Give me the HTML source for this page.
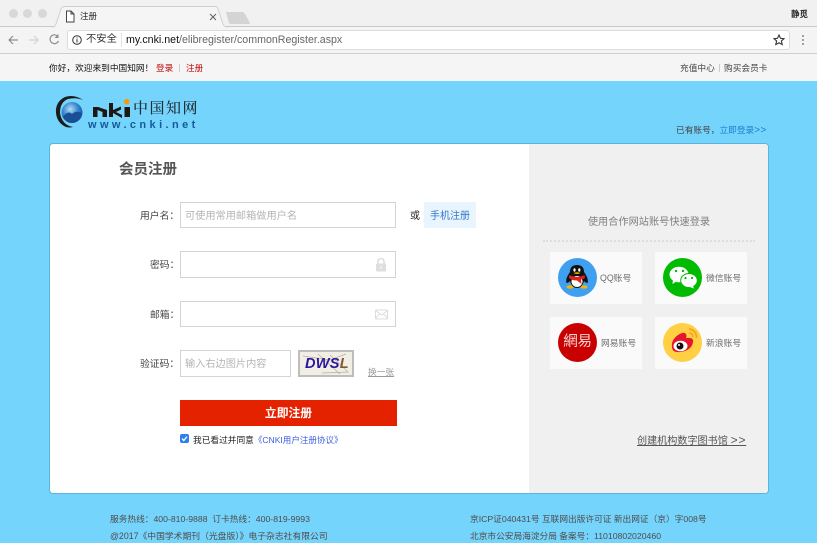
<!DOCTYPE html>
<html lang="zh"><head><meta charset="utf-8"><title>注册</title>
<style>
html,body{margin:0;padding:0;background:#fff}
#p{position:relative;width:817px;height:543px;overflow:hidden;background:#75d4fc;font-family:"Liberation Sans","Noto Sans CJK SC",sans-serif;filter:blur(.35px)}
#p div,#p span.a,#p svg{position:absolute}
.t{white-space:nowrap;line-height:12px}
.inp{background:#fff;border:1px solid #d4d4d4;box-sizing:border-box}
.sb{background:#fafafa;width:92px;height:52px}
</style></head><body><div id="p">

<!-- browser chrome -->
<div style="left:0;top:0;width:817px;height:27px;background:#f1f1f1"></div>
<div style="left:0;top:26px;width:817px;height:1px;background:#c9c9c9"></div>
<div style="left:0;top:27px;width:817px;height:26px;background:#f4f4f4"></div>
<div style="left:0;top:53px;width:817px;height:1px;background:#cfcfcf"></div>
<div style="left:9px;top:9px;width:9px;height:9px;border-radius:50%;background:#d8d8d8"></div>
<div style="left:23px;top:9px;width:9px;height:9px;border-radius:50%;background:#d8d8d8"></div>
<div style="left:38px;top:9px;width:9px;height:9px;border-radius:50%;background:#d8d8d8"></div>
<svg style="left:50px;top:4px" width="185" height="24" viewBox="0 0 185 24"><path d="M2 23 Q5 23 6 20 L11 5 Q12 2.500 15 2.500 L165 2.500 Q167 2.500 168 5 L173 20 Q174 23 178 23" fill="#f5f5f5" stroke="#cfcfcf"/></svg>
<svg style="left:225px;top:11px" width="26" height="14" viewBox="0 0 26 14"><path d="M1 1.500 Q1 1 2 1 L17 1 Q19 1 20 3 L25 12 Q25.500 13 24 13 L6 13 Q4.500 13 4 12 Z" fill="#d4d4d4"/></svg>
<svg style="left:65px;top:10px" width="10" height="13" viewBox="0 0 10 13"><path d="M1.500 1 L6 1 L9 4 L9 12 L1.500 12 Z M6 1 L6 4 L9 4" fill="#fff" stroke="#444" stroke-width="1"/></svg>
<div class="t" style="left:80px;top:10px;font-size:8.500px;color:#222">注册</div>
<svg style="left:209px;top:13px" width="8" height="8" viewBox="0 0 8 8"><path d="M1 1 L7 7 M7 1 L1 7" stroke="#666" stroke-width="1.100"/></svg>
<div class="t" style="left:791px;top:8px;font-size:8.500px;font-weight:bold;color:#222">静觅</div>

<svg style="left:7px;top:33px" width="60" height="14" viewBox="0 0 60 14">
<path d="M11 7 L2 7 M6 3 L2 7 L6 11" fill="none" stroke="#8d8d8d" stroke-width="1.200"/>
<path d="M22 7 L31 7 M27 3 L31 7 L27 11" fill="none" stroke="#d2d2d2" stroke-width="1.200"/>
<path d="M50.500 3 A4.400 4.400 0 1 0 51.500 8" fill="none" stroke="#8d8d8d" stroke-width="1.200"/><path d="M51.500 1 L51.500 5 L47.500 5 Z" fill="#8d8d8d"/></svg>
<div style="left:67px;top:30px;width:723px;height:20px;background:#fff;border:1px solid #dcdcdc;border-radius:3px;box-sizing:border-box"></div>
<svg style="left:72px;top:35px" width="10" height="10" viewBox="0 0 10 10"><circle cx="5" cy="5" r="4.300" fill="none" stroke="#333"/><path d="M5 4.300 L5 7.500 M5 2.400 L5 3.400" stroke="#333"/></svg>
<div class="t" style="left:86px;top:34px;font-size:10.300px;color:#333">不安全</div>
<div style="left:121px;top:33px;width:1px;height:14px;background:#e0e0e0"></div>
<div class="t" style="left:126px;top:34px;font-size:10.650px;color:#111">my.cnki.net<span style="color:#666">/elibregister/commonRegister.aspx</span></div>
<svg style="left:773px;top:34px" width="12" height="12" viewBox="0 0 12 12"><path d="M6 1 L7.500 4.300 L11 4.700 L8.400 7 L9.200 10.600 L6 8.800 L2.800 10.600 L3.600 7 L1 4.700 L4.500 4.300 Z" fill="none" stroke="#333" stroke-width="1.100"/></svg>
<div style="left:802px;top:35px;width:2px;height:2px;background:#888;border-radius:50%"></div>
<div style="left:802px;top:39px;width:2px;height:2px;background:#888;border-radius:50%"></div>
<div style="left:802px;top:43px;width:2px;height:2px;background:#888;border-radius:50%"></div>

<!-- top bar -->
<div style="left:0;top:54px;width:817px;height:27px;background:#f5f5f5"></div>
<div class="t" style="left:49px;top:62px;font-size:8.700px;color:#111">你好，欢迎来到中国知网！</div>
<div class="t" style="left:156px;top:62px;font-size:8.600px;color:#c00808">登录</div>
<div style="left:179px;top:64px;width:1px;height:8px;background:#ccc"></div>
<div class="t" style="left:186px;top:62px;font-size:8.600px;color:#c00808">注册</div>
<div class="t" style="left:680px;top:62px;font-size:8.700px;color:#444">充值中心</div>
<div style="left:719px;top:64px;width:1px;height:8px;background:#ccc"></div>
<div class="t" style="left:724px;top:62px;font-size:8.700px;color:#444">购买会员卡</div>

<!-- logo -->
<svg style="left:50px;top:90px" width="90" height="40" viewBox="50 90 90 40">
<defs><radialGradient id="g" cx=".42" cy=".35" r=".7"><stop offset="0" stop-color="#b4dcf4"/><stop offset=".5" stop-color="#3a8bd0"/><stop offset="1" stop-color="#0d4a90"/></radialGradient></defs>
<circle cx="72" cy="112.500" r="10.500" fill="url(#g)"/>
<path d="M63 117 Q68 110 72 114 Q76 110 82 113 Q80 122 72 123 Q66 123 63 117 Z" fill="#1a4f96"/>
<path d="M83 100 Q74 94 65 97 Q55 102 56 113 Q57 123 66 127 Q70 128 73 127 Q62 125 60 113 Q60 102 68 99 Q76 97 83 100 Z" fill="#1c1c1c"/>
<path d="M93 117 V107 H98 L107 110 V117 H102.500 V112 L97.500 110 V117 Z" fill="#1c1814"/>
<path d="M109 117 V103 H113 V110 L121 106.500 V109.500 L116 112 L122 115 V118 L113 113 V117 Z" fill="#1c1814"/>
<rect x="124.500" y="107" width="5.500" height="10" fill="#1c1814"/>
<circle cx="126.700" cy="101.700" r="2.800" fill="#f59a12"/>
</svg>
<div class="t" style="left:133px;top:98px;font-family:'Noto Serif CJK SC','Liberation Serif',serif;font-size:15px;line-height:20px;color:#1d2b33;letter-spacing:1.500px;font-weight:500">中国知网</div>
<div class="t" style="left:88px;top:119px;font-size:11px;font-weight:bold;color:#155a9c;letter-spacing:3.400px">www.cnki.net</div>

<div class="t" style="left:676px;top:124px;font-size:8.700px;color:#444">已有账号，<span style="color:#1a7fd0">立即登录<span style="font-size:10px;letter-spacing:.5px">&gt;&gt;</span></span></div>

<!-- card -->
<div style="left:49px;top:143px;width:720px;height:351px;background:#fff;border-radius:4px;border:1px solid #5bb4dc;box-sizing:border-box;overflow:hidden">
<div style="left:479px;top:0;width:240px;height:349px;background:#f0f0f0"></div>
</div>

<div class="t" style="left:119px;top:162px;font-size:14.500px;line-height:16px;font-weight:bold;color:#555">会员注册</div>

<div class="t" style="left:140px;top:211px;font-size:9.800px;color:#444">用户名：</div>
<div class="inp" style="left:180px;top:202px;width:216px;height:26px"></div>
<div class="t" style="left:185px;top:211px;font-size:10.200px;color:#b4b4b4">可使用常用邮箱做用户名</div>
<div class="t" style="left:410px;top:211px;font-size:10px;color:#222">或</div>
<div style="left:424px;top:202px;width:52px;height:26px;background:#e9f5fe"></div>
<div class="t" style="left:430px;top:211px;font-size:10px;color:#3477c9">手机注册</div>

<div class="t" style="left:150px;top:260px;font-size:9.800px;color:#444">密码：</div>
<div class="inp" style="left:180px;top:251px;width:216px;height:27px"></div>
<svg style="left:375px;top:257px" width="12" height="15" viewBox="0 0 12 15"><path d="M3 7 L3 4.500 A3 3 0 0 1 9 4.500 L9 7" fill="none" stroke="#dedede" stroke-width="1.600"/><rect x="1" y="6.500" width="10" height="8" rx="1" fill="#dedede"/><rect x="5.300" y="9" width="1.400" height="3" fill="#f4f4f4"/></svg>

<div class="t" style="left:150px;top:310px;font-size:9.800px;color:#444">邮箱：</div>
<div class="inp" style="left:180px;top:301px;width:216px;height:26px"></div>
<svg style="left:375px;top:309px" width="13" height="11" viewBox="0 0 13 11"><rect x=".5" y="1" width="12" height="9" rx="1" fill="none" stroke="#dcdcdc"/><path d="M.5 1.500 L6.500 6 L12.500 1.500 M.5 9.500 L4.500 4.800 M12.500 9.500 L8.500 4.800" fill="none" stroke="#dcdcdc"/></svg>

<div class="t" style="left:140px;top:359px;font-size:9.800px;color:#444">验证码：</div>
<div class="inp" style="left:180px;top:350px;width:111px;height:27px"></div>
<div class="t" style="left:185px;top:359px;font-size:10.200px;color:#b4b4b4">输入右边图片内容</div>
<div style="left:298px;top:350px;width:56px;height:27px;background:#f1eee6;border:2px solid #bdbdbd;box-sizing:border-box;overflow:hidden">
<svg style="left:0;top:0" width="52" height="23" viewBox="0 0 52 23"><path d="M3 4 L30 8 L46 2 M18 2 L40 22 M30 3 L48 20 L22 21" fill="none" stroke="#b9ae96" stroke-width=".7"/></svg>
<div class="t" style="left:5px;top:4px;font-size:14.500px;line-height:16px;font-weight:bold;font-style:italic;color:#2a169c;letter-spacing:.3px">DWS<span style="color:#7d5a36">L</span></div>
</div>
<div class="t" style="left:368px;top:366px;font-size:8.700px;color:#999;text-decoration:underline">换一张</div>

<div style="left:180px;top:400px;width:217px;height:26px;background:#e52200"></div>
<div class="t" style="left:180px;top:406px;width:217px;text-align:center;font-size:11.800px;line-height:14px;font-weight:bold;color:#fff">立即注册</div>
<div style="left:180px;top:434px;width:9px;height:9px;background:#2f7fee;border-radius:2px"></div>
<svg style="left:180px;top:434px" width="9" height="9" viewBox="0 0 9 9"><path d="M2 4.600 L3.800 6.500 L7 2.600" fill="none" stroke="#fff" stroke-width="1.300"/></svg>
<div class="t" style="left:193px;top:434px;font-size:8.700px;color:#222">我已看过并同意<span style="color:#3d5fe0;font-size:8.550px">《CNKI用户注册协议》</span></div>

<!-- right panel -->
<div class="t" style="left:529px;top:217px;width:240px;text-align:center;font-size:10.200px;color:#808080">使用合作网站账号快速登录</div>
<div style="left:543px;top:240px;width:212px;height:0;border-top:2px dotted #dddddd"></div>
<div class="sb" style="left:550px;top:252px"></div>
<div class="sb" style="left:655px;top:252px"></div>
<div class="sb" style="left:550px;top:317px"></div>
<div class="sb" style="left:655px;top:317px"></div>

<div style="left:558px;top:258px;width:39px;height:39px;border-radius:50%;background:#3fa0f2"></div>
<svg style="left:558px;top:258px" width="39" height="39" viewBox="0 0 39 39">
<ellipse cx="12" cy="29" rx="3.500" ry="1.700" fill="#f5b400"/><ellipse cx="26" cy="29" rx="3.500" ry="1.700" fill="#f5b400"/>
<path d="M12 14 Q12 7 19 7 Q26 7 26 14 Q31 21 29.500 25 Q27 24.500 26 23 Q24 30 19 30 Q14 30 12 23 Q11 24.500 8.500 25 Q7 21 12 14 Z" fill="#111"/>
<ellipse cx="19" cy="23.500" rx="5.500" ry="5.500" fill="#fff"/>
<path d="M11.500 17 Q19 21 26.500 17 L27 20 Q24 21.500 23 21.500 L23.500 26 L19 22.500 Q14 22.500 11 20 Z" fill="#e3211c"/>
<ellipse cx="16.500" cy="12" rx="1.100" ry="1.700" fill="#fff"/><ellipse cx="21.300" cy="12" rx="1.100" ry="1.700" fill="#fff"/>
<path d="M15.500 15 Q19 13.500 22.500 15 Q19 17 15.500 15 Z" fill="#f5b400"/></svg>

<div style="left:663px;top:258px;width:39px;height:39px;border-radius:50%;background:#00bb00"></div>
<svg style="left:663px;top:258px" width="39" height="39" viewBox="0 0 39 39">
<ellipse cx="16" cy="16.500" rx="9.500" ry="7.800" fill="#fff"/><path d="M10 21 L9.500 26 L14 23 Z" fill="#fff"/>
<ellipse cx="26" cy="22.500" rx="8.300" ry="7" fill="#fff" stroke="#00bb00"/><path d="M29.500 27 L31 30.500 L26.500 29 Z" fill="#fff"/>
<circle cx="13" cy="13" r="1.200" fill="#00bb00"/><circle cx="20" cy="13" r="1.200" fill="#00bb00"/>
<circle cx="22.500" cy="20" r="1.100" fill="#00bb00"/><circle cx="29" cy="20" r="1.100" fill="#00bb00"/></svg>

<div style="left:558px;top:323px;width:39px;height:39px;border-radius:50%;background:#c90000"></div>
<div class="t" style="left:558px;top:334px;width:39px;text-align:center;font-size:14.500px;line-height:17px;color:#f7d5d5;letter-spacing:-.3px">網易</div>

<div style="left:663px;top:323px;width:39px;height:39px;border-radius:50%;background:#ffd044"></div>
<svg style="left:663px;top:323px" width="39" height="39" viewBox="0 0 39 39">
<path d="M9 24 Q8 17 15 12 Q21 8 23 11 Q24 13 23 15 Q31 14 30 19 Q29 27 18 29 Q9 30 9 24 Z" fill="#e6162d"/>
<ellipse cx="17.500" cy="23" rx="7" ry="5.300" fill="#fff"/><circle cx="17" cy="23" r="3.500" fill="#111"/><circle cx="16" cy="22" r="1" fill="#fff"/>
<path d="M26 6 Q33.500 7 33.500 15 M26 10 Q29.500 10 30 14" fill="none" stroke="#f5a623" stroke-width="1.800"/></svg>

<div class="t" style="left:600px;top:272px;font-size:8.800px;color:#6e6e6e">QQ账号</div>
<div class="t" style="left:706px;top:272px;font-size:8.800px;color:#6e6e6e">微信账号</div>
<div class="t" style="left:601px;top:337px;font-size:8.800px;color:#6e6e6e">网易账号</div>
<div class="t" style="left:706px;top:337px;font-size:8.800px;color:#6e6e6e">新浪账号</div>

<div class="t" style="left:637px;top:434px;font-size:10.100px;color:#555;text-decoration:underline">创建机构数字图书馆 <span style="font-size:12px;letter-spacing:.8px">&gt;&gt;</span></div>

<!-- footer -->
<div class="t" style="left:110px;top:513px;font-size:8.700px;color:#4d4d4d">服务热线：400-810-9888&nbsp; 订卡热线：400-819-9993</div>
<div class="t" style="left:110px;top:530px;font-size:8.800px;color:#4d4d4d">@2017《中国学术期刊（光盘版）》电子杂志社有限公司</div>
<div class="t" style="left:470px;top:513px;font-size:8.700px;color:#4d4d4d">京ICP证040431号 互联网出版许可证 新出网证（京）字008号</div>
<div class="t" style="left:470px;top:530px;font-size:8.700px;color:#4d4d4d">北京市公安局海淀分局 备案号：11010802020460</div>
</div></body></html>
